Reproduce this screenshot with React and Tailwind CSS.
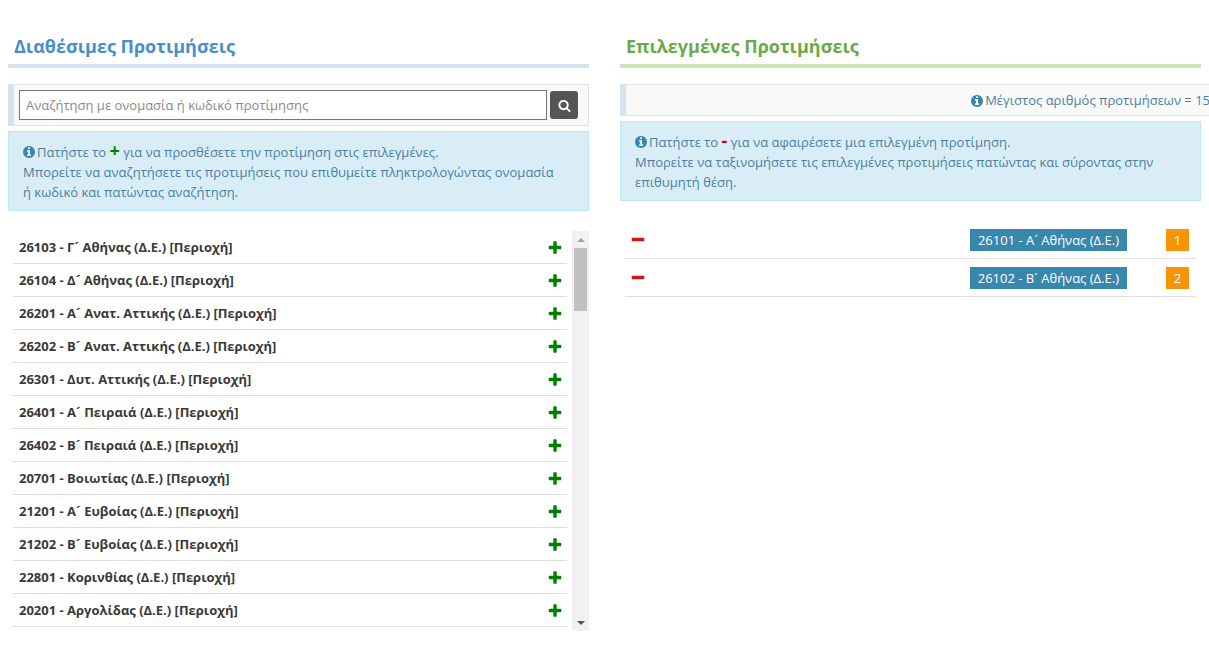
import { useState } from "react";

const ICONS = {
  plus: "M1600 736v192q0 40-28 68t-68 28h-416v416q0 40-28 68t-68 28h-192q-40 0-68-28t-28-68v-416h-416q-40 0-68-28t-28-68v-192q0-40 28-68t68-28h416v-416q0-40 28-68t68-28h192q40 0 68 28t28 68v416h416q40 0 68 28t28 68z",
  minus: "M1600 736v192q0 40-28 68t-68 28h-1216q-40 0-68-28t-28-68v-192q0-40 28-68t68-28h1216q40 0 68 28t28 68z",
  info: "M1152 1376v-160q0-14-9-23t-23-9h-96v-512q0-14-9-23t-23-9h-320q-14 0-23 9t-9 23v160q0 14 9 23t23 9h96v320h-96q-14 0-23 9t-9 23v160q0 14 9 23t23 9h448q14 0 23-9t9-23zm-128-896v-160q0-14-9-23t-23-9h-192q-14 0-23 9t-9 23v160q0 14 9 23t23 9h192q14 0 23-9t9-23zm640 416q0 209-103 385.5t-279.5 279.5-385.5 103-385.5-103-279.5-279.5-103-385.5 103-385.5 279.5-279.5 385.5-103 385.5 103 279.5 279.5 103 385.5z",
  search: "M1216 832q0-185-131.5-316.5t-316.5-131.5-316.5 131.5-131.5 316.5 131.5 316.5 316.5 131.5 316.5-131.5 131.5-316.5zm512 832q0 52-38 90t-90 38q-54 0-90-38l-343-342q-179 124-399 124-143 0-273.5-55.5t-225-150-150-225-55.5-273.5 55.5-273.5 150-225 225-150 273.5-55.5 273.5 55.5 225 150 150 225 55.5 273.5q0 220-124 399l343 343q37 37 37 90z",
};

const Icon = ({ name, className }) => (
  <svg viewBox="0 0 1792 1792" fill="currentColor" className={className} aria-hidden="true">
    <path d={ICONS[name]} />
  </svg>
);

const available = [
  { code: "26103", name: "Γ´ Αθήνας (Δ.Ε.)" },
  { code: "26104", name: "Δ´ Αθήνας (Δ.Ε.)" },
  { code: "26201", name: "Α´ Ανατ. Αττικής (Δ.Ε.)" },
  { code: "26202", name: "Β´ Ανατ. Αττικής (Δ.Ε.)" },
  { code: "26301", name: "Δυτ. Αττικής (Δ.Ε.)" },
  { code: "26401", name: "Α´ Πειραιά (Δ.Ε.)" },
  { code: "26402", name: "Β´ Πειραιά (Δ.Ε.)" },
  { code: "20701", name: "Βοιωτίας (Δ.Ε.)" },
  { code: "21201", name: "Α´ Ευβοίας (Δ.Ε.)" },
  { code: "21202", name: "Β´ Ευβοίας (Δ.Ε.)" },
  { code: "22801", name: "Κορινθίας (Δ.Ε.)" },
  { code: "20201", name: "Αργολίδας (Δ.Ε.)" },
];

const selected = [
  { code: "26101", name: "Α´ Αθήνας (Δ.Ε.)" },
  { code: "26102", name: "Β´ Αθήνας (Δ.Ε.)" },
];

const InfoBox = ({ children }) => (
  <div className="mt-[5px] border border-[#bce8f1] bg-[#d9edf7] pt-[10px] pr-7 pb-2 pl-[14px] leading-5 text-[#4c7fa0]">
    <Icon name="info" className="-ml-px mr-px inline h-[14px] w-[14px] align-[-2px] text-[#3a87ad]" />
    {children}
  </div>
);

const App = () => {
  const [query, setQuery] = useState("");

  return (
    <div className="grid grid-cols-2 gap-[31px] overflow-hidden bg-white px-2 pt-8 pb-5 font-['Open_Sans',sans-serif] text-[13px] text-[#393939]">
      {/* Available */}
      <section className="min-w-0">
        <h2 className="border-b-4 border-[#d5e3ef] pb-1 pl-[6px] text-lg leading-7 font-bold text-[#478fca]">
          Διαθέσιμες Προτιμήσεις
        </h2>

        <form
          onSubmit={(e) => e.preventDefault()}
          className="mt-4 flex items-center gap-[3px] border border-l-6 border-[#e3e3e3] border-l-[#d5e3ef] bg-[#f9f9f9] py-[5px] pr-[10px] pl-[5px]"
        >
          <input
            type="text"
            aria-label="Αναζήτηση"
            value={query}
            onChange={(e) => setQuery(e.target.value)}
            placeholder="Αναζήτηση με ονομασία ή κωδικό προτίμησης"
            className="h-[30px] min-w-0 flex-1 border border-[#777] bg-white px-[6px] text-[13px] placeholder:text-[#8a8a8a]"
          />
          <button
            type="submit"
            aria-label="Αναζήτηση"
            className="flex h-7 w-7 items-center justify-center rounded-[3px] bg-[#555] text-white"
          >
            <Icon name="search" className="h-[13px] w-[13px]" />
          </button>
        </form>

        <InfoBox>
          Πατήστε το <b className="text-lg leading-[0px] text-[#008000]">+</b> για να προσθέσετε την προτίμηση στις
          επιλεγμένες.
          <br />
          Μπορείτε να αναζητήσετε τις προτιμήσεις που επιθυμείτε πληκτρολογώντας ονομασία ή κωδικό και πατώντας
          αναζήτηση.
        </InfoBox>

        <div className="mt-5 flex h-[400px] gap-[5px] pl-[5px]">
          <ul className="flex-1">
            {available.map((item) => (
              <li
                key={item.code}
                className="flex h-[33px] items-center justify-between border-b border-[#ddd] pt-[2px] pr-1 pl-[6px] font-bold"
              >
                <span>
                  {item.code} - {item.name} [Περιοχή]
                </span>
                <button type="button" aria-label={`Προσθήκη ${item.code}`} className="text-[#008000]">
                  <Icon name="plus" className="h-4 w-4" />
                </button>
              </li>
            ))}
          </ul>

          {/* Scrollbar */}
          <div className="flex w-[17px] flex-col items-center bg-[#f1f1f1]">
            <div className="flex h-[17px] items-center">
              <svg viewBox="0 0 8 4" className="h-1 w-2" fill="#a3a3a3">
                <path d="M0 4 4 0l4 4z" />
              </svg>
            </div>
            <div className="h-[63px] w-[13px] bg-[#c1c1c1]" />
            <div className="mt-auto flex h-[17px] items-center">
              <svg viewBox="0 0 8 4" className="h-1 w-2" fill="#505050">
                <path d="M0 0h8L4 4z" />
              </svg>
            </div>
          </div>
        </div>
      </section>

      {/* Selected */}
      <section className="min-w-0">
        <h2 className="border-b-4 border-[#cde2b8] pb-1 pl-[6px] text-lg leading-7 font-bold text-[#69aa46]">
          Επιλεγμένες Προτιμήσεις
        </h2>

        <div className="mt-4 -mr-4 flex h-8 items-center justify-end border border-l-6 border-[#e3e3e3] border-l-[#d5e3ef] bg-[#f9f9f9] pt-px pr-[6px] text-[#4c7fa0]">
          <Icon name="info" className="mr-px h-[14px] w-[14px] text-[#3a87ad]" />
          Μέγιστος αριθμός προτιμήσεων = 15
        </div>

        <InfoBox>
          Πατήστε το <b className="text-lg leading-[0px] text-[#dd0000]">-</b> για να αφαιρέσετε μια επιλεγμένη
          προτίμηση.
          <br />
          Μπορείτε να ταξινομήσετε τις επιλεγμένες προτιμήσεις πατώντας και σύροντας στην επιθυμητή θέση.
        </InfoBox>

        <ul className="mt-5 px-[5px]">
          {selected.map((item, index) => (
            <li key={item.code} className="flex h-[38px] items-center border-b border-[#ddd] pr-[5px] pl-[5px]">
              <button type="button" aria-label={`Αφαίρεση ${item.code}`} className="text-[#d11515]">
                <Icon name="minus" className="h-4 w-4" />
              </button>
              <span className="mr-[39px] ml-auto bg-[#3a87ad] px-2 leading-[22px] text-white">
                {item.code} - {item.name}
              </span>
              <span className="mr-[2px] w-[23px] bg-[#f89406] text-center leading-[22px] text-white">
                {index + 1}
              </span>
            </li>
          ))}
        </ul>
      </section>
    </div>
  );
};

export default App;
